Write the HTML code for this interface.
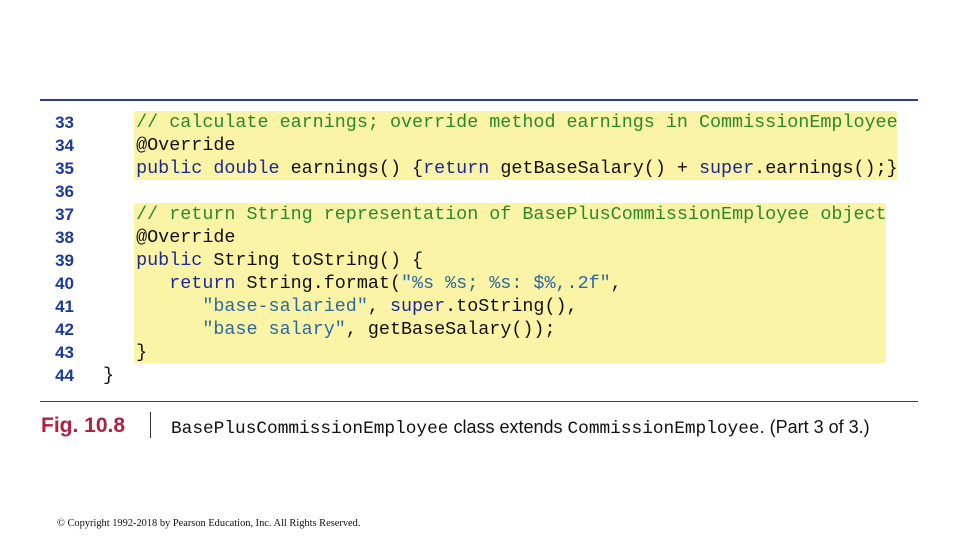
<!DOCTYPE html><html><head><style>
body{margin:0;width:960px;height:540px;background:#fff;position:relative;overflow:hidden;font-family:"Liberation Mono",monospace}
.hl{position:absolute;background:#fbf3a6}
.ln{position:absolute;left:36px;width:38px;text-align:right;font:bold 17px/23px "Liberation Sans",sans-serif;color:#1b3a9c;top:111px}
.code{position:absolute;left:103px;top:111px;font-size:18.4px;line-height:23px;white-space:pre;color:#111}
.c{color:#2a8a2a}.k{color:#1a2a96}.s{color:#2a6a9e}
.rule{position:absolute;left:40px;width:878px;height:2px;background:#2a3f8f}
</style></head><body>
<div class="rule" style="top:99px"></div>
<div class="hl" style="left:134px;top:111px;width:763px;height:69px"></div>
<div class="hl" style="left:134px;top:203px;width:752px;height:160px"></div>
<div class="ln">33<br>34<br>35<br>36<br>37<br>38<br>39<br>40<br>41<br>42<br>43<br>44</div>
<div class="code"><span class="c">   // calculate earnings; override method earnings in CommissionEmployee</span>
   @Override
   <span class="k">public double</span> earnings() {<span class="k">return</span> getBaseSalary() + <span class="k">super</span>.earnings();}

   <span class="c">// return String representation of BasePlusCommissionEmployee object</span>
   @Override
   <span class="k">public</span> String toString() {
      <span class="k">return</span> String.format(<span class="s">"%s %s; %s: $%,.2f"</span>,
         <span class="s">"base-salaried"</span>, <span class="k">super</span>.toString(),
         <span class="s">"base salary"</span>, getBaseSalary());
   }
}</div>
<div class="rule" style="top:401px;height:1px"></div>
<div style="position:absolute;left:41px;top:413px;font:bold 21px/26px 'Liberation Sans',sans-serif;color:#b02040">Fig. 10.8</div>
<div style="position:absolute;left:150px;top:412px;width:1px;height:26px;background:#333"></div>
<div style="position:absolute;left:171px;top:415px;font-size:17.8px;line-height:24px;white-space:nowrap;color:#111">BasePlusCommissionEmployee<span style="font-family:'Liberation Sans',sans-serif;font-size:18px"> class extends </span>CommissionEmployee<span style="font-family:'Liberation Sans',sans-serif;font-size:18px">. (Part 3 of 3.)</span></div>
<div style="position:absolute;left:57px;top:518px;font:10.4px 'Liberation Serif',serif;color:#111;white-space:nowrap">© Copyright 1992-2018 by Pearson Education, Inc. All Rights Reserved.</div>
</body></html>
